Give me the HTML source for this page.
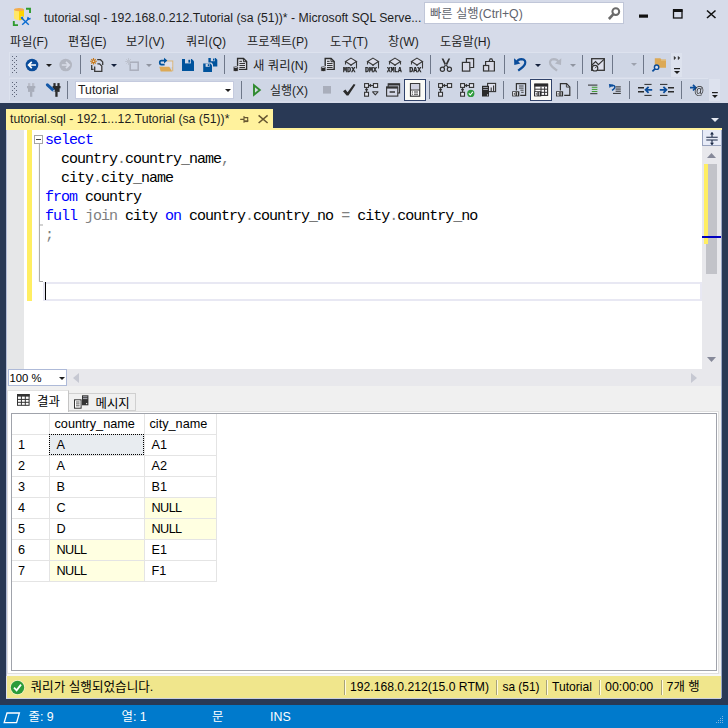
<!DOCTYPE html>
<html lang="ko">
<head>
<meta charset="utf-8">
<title>tutorial.sql - 192.168.0.212.Tutorial (sa (51))* - Microsoft SQL Server Management Studio</title>
<style>
html,body{margin:0;padding:0;}
body{width:728px;height:728px;overflow:hidden;position:relative;background:#D6DBE9;
  font-family:"Liberation Sans","Noto Sans CJK KR","NanumGothic",sans-serif;font-size:12px;color:#1e1e1e;}
.abs,svg{position:absolute;}
svg{overflow:visible;}
.t{position:absolute;white-space:nowrap;line-height:16px;}
#title{left:44px;top:10px;font-size:12.27px;color:#1e1e1e;}
#quick{left:424px;top:2px;width:199.5px;height:22px;background:#fff;border:1px solid #c0c6d8;box-sizing:border-box;}
#quick .t{left:5px;top:3px;font-size:12.3px;color:#5f646e;}
#menubar .t{top:34px;font-size:12.2px;}
.tb{background:#CFD6E5;box-shadow:-1px -1px 0 #DDE2EE;}
.ov{background:#DDE2EE;}
.sep{position:absolute;width:1px;background:#7f8aa3;}
.tog{position:absolute;box-sizing:border-box;border:1px solid #30426a;background:#FBFBF6;}
#navy{left:0;top:103px;width:728px;height:602px;background:#293955;}
#tab{left:6px;top:109px;width:267px;height:20px;background:#FFF29D;}
#tab .t{left:4px;top:2px;font-size:12.26px;color:#1e1e1e;}
#yline{left:6px;top:128px;width:716px;height:2px;background:#FFF29D;}
#editor{left:6px;top:130px;width:716px;height:239px;background:#fff;overflow:hidden;}
#margin{left:0;top:0;width:18px;height:239px;background:#E6E7E8;}
#ybar{left:20.5px;top:0;width:5px;height:171px;background:#FFEE62;}
pre.code{position:absolute;margin:0;left:39px;top:1px;font-family:"Liberation Mono","DejaVu Sans Mono",monospace;font-size:15px;letter-spacing:-1.001px;line-height:19px;color:#000;}
.k{color:#0000ff;}.g{color:#808080;}
#vscroll{left:696px;top:0;width:20px;height:239px;background:#E8E8EC;}
#hrow{left:6px;top:369px;width:716px;height:17px;background:#E8E8EC;}
#zoom{left:1.5px;top:0;width:59.5px;height:16.5px;background:#fff;border:1px solid #AEBAD8;box-sizing:border-box;}
#zoom .t{left:1px;top:0;font-size:11.3px;color:#000;}
#respane{left:6px;top:386px;width:716px;height:290px;background:#F0F0F0;}
#respane:after{content:"";position:absolute;left:0;top:288px;width:716px;height:2px;background:#F7F7F7;}
#grid{left:5px;top:27px;width:706px;height:258px;background:#fff;border:1px solid #A0A3AB;box-sizing:border-box;overflow:hidden;}
#qstatus{left:6px;top:676px;width:715px;height:22.5px;background:#F0E68C;box-sizing:border-box;border-bottom:1px solid #cdd0e0;border-left:1px solid #dfe0ea;}
#qstatus .t{top:3px;font-size:12.4px;color:#000;}
#qstatus i{position:absolute;top:4px;width:1px;height:15px;background:#fffbe0;border-left:1px solid #a8a27a;}
#statusbar{left:0;top:705px;width:728px;height:23px;background:#007ACC;color:#fff;}
#statusbar .t{top:4px;font-size:12.4px;}
table.res{position:absolute;left:0;top:0;border-collapse:collapse;font-size:12.7px;letter-spacing:0;color:#000;}
table.res td{height:21px;padding:0 0 0 7px;border-right:1px solid #e4e4e4;border-bottom:1px solid #e4e4e4;white-space:nowrap;box-sizing:border-box;}
td.n{background:#FFFFE1;letter-spacing:-0.6px;}
table.res tr.h td{height:20px;}
table.res td:first-child{padding-left:6px;}
</style>
</head>
<body>
<!-- title bar -->
<svg style="left:0;top:0" width="40" height="30" viewBox="0 0 40 30">
  <path d="M14 9.5 V18.6 C15.5 20.2 18 20.4 19 20.2 V11Z" fill="#FFE76A"/>
  <path d="M19 11 V20.2 C21 20.2 23 19.4 24 18.4 V9.5Z" fill="#FFD400"/>
  <ellipse cx="19" cy="9.6" rx="5" ry="1.7" fill="#F4AC4C"/>
  <path d="M26 8.8 H30 V13" fill="none" stroke="#2E9B2E" stroke-width="1.9"/>
  <path d="M13.8 21 V25.1 H18" fill="none" stroke="#2E9B2E" stroke-width="1.9"/>
  <path d="M20.5 16.6 L23 16.2 L24 17.6 L23.2 19.4Z" fill="#D6DBE9"/>
  <path d="M21.6 18 L28.8 24.8 M29 18.4 L22.2 24.8" stroke="#0C6CD0" stroke-width="1.4" fill="none"/>
  <path d="M20.6 17.6 L22.6 16.6 L23.4 18.6 L21.6 19.2Z" fill="#0C6CD0"/>
  <path d="M27.6 19.6 L28.2 17 M28 19.2 L30.6 18.6" stroke="#0C6CD0" stroke-width="1.5" fill="none"/>
</svg>
<div id="title" class="t">tutorial.sql - 192.168.0.212.Tutorial (sa (51))* - Microsoft SQL Serve...</div>
<div id="quick" class="abs"><span class="t">빠른 실행(Ctrl+Q)</span>
  <svg style="left:183px;top:4px" width="12" height="13" viewBox="0 0 12 13"><circle cx="7.8" cy="4.6" r="3.4" fill="none" stroke="#6a6a6a" stroke-width="2"/><path d="M5.4 7.2 L0.9 12" stroke="#6a6a6a" stroke-width="2.6"/></svg>
</div>
<svg style="left:639px;top:8px" width="80" height="12" viewBox="0 0 80 12">
  <rect x="0" y="6.5" width="9" height="3.2" fill="#111"/>
  <rect x="34.5" y="2" width="8.5" height="8" fill="none" stroke="#111" stroke-width="1.3"/><rect x="34" y="1" width="9.5" height="3" fill="#111"/>
  <path d="M68 2.5 L76.5 10 M76.5 2.5 L68 10" stroke="#111" stroke-width="1.6"/>
</svg>
<!-- menu bar -->
<div id="menubar">
  <span class="t" style="left:10px">파일(F)</span><span class="t" style="left:68px">편집(E)</span><span class="t" style="left:126px">보기(V)</span><span class="t" style="left:186px">쿼리(Q)</span><span class="t" style="left:247px">프로젝트(P)</span><span class="t" style="left:330px">도구(T)</span><span class="t" style="left:388px">창(W)</span><span class="t" style="left:440px">도움말(H)</span>
</div>
<!-- toolbars -->
<div class="abs tb" style="left:10px;top:53px;width:661px;height:23.5px"></div>
<div class="abs ov" style="left:671px;top:52.5px;width:11px;height:24px"></div>
<div class="abs tb" style="left:10px;top:79px;width:699px;height:22px"></div>
<div class="abs ov" style="left:709px;top:78.8px;width:11px;height:22.2px"></div>
<div class="abs" style="left:75.4px;top:81px;width:159.1px;height:18px;background:#fff;border:1px solid #c4cade;box-sizing:border-box"></div>
<div class="tog" style="left:404.3px;top:79.3px;width:21.4px;height:21.4px"></div>
<div class="tog" style="left:530px;top:79.3px;width:22px;height:21.4px"></div>
<span class="t" style="left:78px;top:82px;font-size:12.3px;color:#1e1e1e">Tutorial</span>
<span class="t" style="left:253px;top:58px;font-size:12.4px">새 쿼리(N)</span>
<span class="t" style="left:270px;top:83px;font-size:12px">실행(X)</span>
<svg style="left:0;top:50px;will-change:transform" width="728" height="54" viewBox="0 50 728 54">
 <defs>
  <pattern id="gp" x="12" y="56" width="4" height="4" patternUnits="userSpaceOnUse"><rect x="0" y="0" width="1" height="1" fill="#5d6579"/><rect x="2" y="2" width="1" height="1" fill="#5d6579"/></pattern>
  <pattern id="gp2" x="12" y="82" width="4" height="4" patternUnits="userSpaceOnUse"><rect x="0" y="0" width="1" height="1" fill="#5d6579"/><rect x="2" y="2" width="1" height="1" fill="#5d6579"/></pattern>
 </defs>
 <rect x="12" y="56" width="5" height="17" fill="url(#gp)"/>
 <rect x="12" y="82" width="5" height="15" fill="url(#gp2)"/>
 <!-- separators row1 -->
 <g fill="#6e7789">
  <rect x="80" y="55" width="1" height="19"/><rect x="224" y="55" width="1" height="19"/><rect x="430" y="55" width="1" height="19"/><rect x="504" y="55" width="1" height="19"/><rect x="582" y="55" width="1" height="19"/><rect x="612" y="55" width="1" height="19"/><rect x="643" y="55" width="1" height="19"/>
  <rect x="67" y="81" width="1" height="18"/><rect x="241" y="81" width="1" height="18"/><rect x="429" y="81" width="1" height="18"/><rect x="503" y="81" width="1" height="18"/><rect x="577" y="81" width="1" height="18"/><rect x="629" y="81" width="1" height="18"/><rect x="681" y="81" width="1" height="18"/>
 </g>
 <!-- back / forward -->
 <circle cx="32" cy="65" r="6.3" fill="#0A4C9A"/>
 <path d="M28.6 65 H36 M31.8 61.8 L28.6 65 L31.8 68.2" stroke="#fff" stroke-width="1.7" fill="none"/>
 <path d="M46 64 H52 L49 67Z" fill="#1e1e1e"/>
 <circle cx="65.7" cy="65" r="6.3" fill="#B2B6C1"/>
 <path d="M61.8 65 H69 M66 61.8 L69.2 65 L66 68.2" stroke="#D9DDE8" stroke-width="1.7" fill="none"/>
 <!-- new item -->
 <g fill="none" stroke="#3a3a3a" stroke-width="1.3">
  <path d="M97.2 59.7 H100.5 L102.7 61.9 V65"/>
  <path d="M91.7 65 V69.3 H93.6"/>
  <path d="M97.4 63.8 H99.5 L101.8 66.1 V71.3 H94.7 V66.4" fill="#DEE0EC"/>
 </g>
 <path d="M93.5 58.1 V64.6 M90.1 61.3 H96.9 M91.3 59.1 L95.7 63.5 M95.7 59.1 L91.3 63.5" stroke="#C8791B" stroke-width="1.1"/>
 <circle cx="93.5" cy="61.3" r="0.8" fill="#E9E2D8"/>
 <path d="M111 64 H117 L114 67Z" fill="#14213d"/>
 <!-- disabled new -->
 <rect x="130.2" y="62.2" width="8" height="8" fill="none" stroke="#A9AEBB" stroke-width="1.5"/>
 <path d="M128.5 58 V65 M125.2 61.5 H131.8 M126.2 59.2 L130.8 63.8 M130.8 59.2 L126.2 63.8" stroke="#BEC3CF" stroke-width="1"/>
 <path d="M146 64 H152 L149 67Z" fill="#8f94a0"/>
 <!-- open -->
 <path d="M166.4 61.1 H172.7 V71.3" fill="none" stroke="#DCB67A" stroke-width="1.1"/>
 <rect x="163" y="61.6" width="9.2" height="5.4" fill="#DDDFEA"/>
 <path d="M159.3 66.7 H169.2 L172.3 71.6 H160.7Z" fill="#DCA956"/>
 <path d="M164.6 64.6 H161.4 C159.2 64.6 159.2 60.6 161.4 60.6 H165" fill="none" stroke="#00539C" stroke-width="1.7"/>
 <path d="M164 57.8 L167.4 60.6 L164 63.4Z" fill="#00539C"/>
 <!-- save -->
 <path d="M182 59 H191.8 L194 61.2 V71 H182Z" fill="#00539C"/>
 <rect x="185" y="59" width="6" height="4.4" fill="#CFD6E5"/><rect x="188.4" y="59.8" width="1.8" height="2.8" fill="#00539C"/>
 <!-- save all -->
 <path d="M208.4 58 H215.6 L217.3 59.7 V66.6 H208.4Z" fill="#00539C"/>
 <rect x="210.8" y="58" width="4" height="3.2" fill="#CFD6E5"/><rect x="213" y="58.6" width="1.3" height="2" fill="#00539C"/>
 <path d="M202.2 62.6 H211.4 L213 64.2 V72.6 H202.2Z" fill="#CFD6E5"/>
 <path d="M203.2 63.6 H210.4 L212 65.2 V72 H203.2Z" fill="#00539C"/>
 <rect x="205.6" y="63.6" width="4" height="3.2" fill="#CFD6E5"/><rect x="207.8" y="64.2" width="1.3" height="2" fill="#00539C"/>
 <!-- new query & db doc icons -->
 <g id="dbdoc">
  <path d="M237.6 66 V58.5 H243.5 L246.6 61.5 V69.4 H239" fill="#E6E8F1" stroke="#2f2f2f" stroke-width="1.4"/>
  <path d="M243.4 58.7 V61.7 H246.4" fill="none" stroke="#2f2f2f" stroke-width="1"/>
  <path d="M239.4 61.3 H242 M239.4 63.45 H245 M239.4 65.45 H245 M239.4 67.45 H245" stroke="#2b2b2b" stroke-width="1"/>
  <path d="M233.2 67.2 A2.55 1.1 0 0 1 238.3 67.2 V70.5 A2.55 1.1 0 0 1 233.2 70.5Z" fill="#2b2b2b" stroke="#DCE0EC" stroke-width="0.7"/>
  <ellipse cx="235.75" cy="67.3" rx="1.7" ry="0.6" fill="#b7bbc8"/>
 </g>
 <use href="#dbdoc" x="87.6" y="0"/>
 <!-- MDX DMX XMLA DAX -->
 <g id="cube" stroke="#3a3a3a" stroke-width="1.1">
  <path d="M351 58.1 L356.5 61.5 L351 65 L345.5 61.5Z" fill="#DCDEEA"/><path d="M345.5 61.5 V64.6 M356.5 61.5 V64.6 M351 65 V66" fill="none"/>
 </g>
 <path d="M356.5 64 V68.4 M378.5 64 V68.4 M422.5 64 V68.4" stroke="#3a3a3a" stroke-width="1.1"/>
 <use href="#cube" x="22" y="0"/><use href="#cube" x="44" y="0"/><use href="#cube" x="66" y="0"/>
 <g font-family="Liberation Mono, monospace" font-weight="bold" font-size="6.6" fill="#222" stroke="#222" stroke-width="0.25" lengthAdjust="spacingAndGlyphs">
  <text x="343" y="71.6" textLength="12.2" lengthAdjust="spacingAndGlyphs">MDX</text><text x="365" y="71.6" textLength="12" lengthAdjust="spacingAndGlyphs">DMX</text><text x="387" y="71.6" textLength="14.6" lengthAdjust="spacingAndGlyphs">XMLA</text><text x="409.2" y="71.6" textLength="12" lengthAdjust="spacingAndGlyphs">DAX</text>
 </g>
 <!-- cut copy paste -->
 <path d="M441.6 58.4 L443.4 58.4 L446.6 65 L445.2 66.2Z M450.2 58.4 L448.4 58.4 L445.2 65 L446.6 66.2Z" fill="#333"/>
 <g fill="none" stroke="#333" stroke-width="1.2">
  <path d="M445.4 65.4 L443.6 67.4 M446.4 65.4 L448.2 67.4"/>
  <circle cx="442.4" cy="69.2" r="2.1"/><circle cx="449.4" cy="69.2" r="2.1"/>
  <path d="M466.4 62 V58.6 H473.6 V67.5 H470.2" fill="#D8DAE6"/>
  <rect x="462.4" y="62.4" width="7.4" height="8.7" fill="#D8DAE6"/>
  <path d="M489 61.4 L490.2 58.8 H491.8 L493 61.4"/>
  <path d="M485.6 65 V61.5 H494.4 V71 H489.2" fill="#D8DAE6"/>
  <rect x="483.5" y="65.5" width="5.2" height="5.5" fill="#D8DAE6"/>
 </g>
 <!-- undo / redo -->
 <g id="undo" stroke="#0A4C9A" fill="#0A4C9A"><path d="M516.6 62.6 C517.4 60 519.6 59.1 521.6 59.1 C524.6 59.2 526 61.6 525 64 C524 66.4 521 68.6 518.2 70.6" fill="none" stroke-width="2.2"/>
 <path d="M514 58.2 L514.3 65 L520.4 63.4Z" stroke="none"/></g>
 <g transform="translate(1075.3,0) scale(-1,1)" stroke="#B2B6C1" fill="#B2B6C1"><path d="M516.6 62.6 C517.4 60 519.6 59.1 521.6 59.1 C524.6 59.2 526 61.6 525 64 C524 66.4 521 68.6 518.2 70.6" fill="none" stroke-width="2.2"/><path d="M514 58.2 L514.3 65 L520.4 63.4Z" stroke="none"/></g>
 <path d="M535 64 H541 L538 67Z" fill="#14213d"/>
 <path d="M570 64 H576 L573 67Z" fill="#8f94a0"/>
 <!-- activity monitor -->
 <rect x="591.7" y="58.7" width="12.6" height="11.6" fill="#DEE0EC" stroke="#333" stroke-width="1.3"/>
 <path d="M592 65 L595.6 61.6 L598.4 64.6 L604 59.4" fill="none" stroke="#333" stroke-width="1.2"/>
 <circle cx="595" cy="68.2" r="2.8" fill="#DEE0EC" stroke="#333" stroke-width="1.2"/><path d="M595 68.2 L596.6 66.6" stroke="#333" stroke-width="0.9"/>
 <path d="M631 63 H637 L634 66Z" fill="#9da2ae"/>
 <!-- find in files -->
 <path d="M654.8 58.2 H660.4 L661.4 59.4 H666 V67.7 H654.8Z" fill="#DCA956"/>
 <path d="M661 60.3 H666" stroke="#E9C588" stroke-width="0.7"/>
 <circle cx="656.6" cy="67.2" r="2.2" fill="#DCE0EC" stroke="#0A4C9A" stroke-width="1.4"/>
 <path d="M655 68.8 L652.4 71.4" stroke="#0A4C9A" stroke-width="1.7"/>
 <!-- overflow 1 -->
 <path d="M674.2 56.4 L675.8 58 L674.2 59.6Z M678.2 56.4 L679.8 58 L678.2 59.6Z" fill="#1e1e1e" stroke="#1e1e1e" stroke-width="0.5"/>
 <rect x="674" y="68" width="6" height="1.2" fill="#1e1e1e"/><path d="M674 71 H680 L677 74Z" fill="#1e1e1e"/>

 <!-- row 2 -->
 <g fill="#A9AEBB"><rect x="28" y="83.1" width="2.3" height="3.2" fill="#B9BDC9"/><rect x="32" y="83.1" width="2.3" height="3.2" fill="#B9BDC9"/><rect x="27" y="86" width="8.3" height="2.3"/><rect x="28" y="88" width="6.3" height="3.9"/><rect x="30" y="91.8" width="2.3" height="5"/></g>
 <g fill="#2b2b2b"><rect x="53.4" y="83.1" width="2.2" height="3.2"/><rect x="57.4" y="83.1" width="2.2" height="3.2"/><rect x="52.6" y="86" width="7.9" height="2.3"/><rect x="53.4" y="88" width="6.2" height="3.9"/><rect x="55.3" y="91.8" width="2.3" height="5"/></g>
 <path d="M47.4 84.9 L53.2 90.2" stroke="#1559A8" stroke-width="3.1" stroke-linecap="round"/><path d="M52.4 91.4 L54.8 91.8 L54.4 89.4Z" fill="#E8ECF4"/>
 <path d="M225 89 H231 L228 92Z" fill="#1e1e1e"/>
 <path d="M254 85.2 V94.8 L259.8 90Z" fill="#D3DCE0" stroke="#2F8A2F" stroke-width="1.9" stroke-linejoin="miter"/>
 <rect x="323" y="86" width="8" height="7.6" fill="#A9AEBB"/>
 <path d="M343 91.3 L345.4 89.5 L347.6 92.2 L353.7 84 L355.5 84.7 L348.4 95.6 L346.6 95.6Z" fill="#2b2b2b"/>
 <!-- plan icons -->
 <g id="plan" fill="none" stroke="#333" stroke-width="1.1">
  <rect x="438.6" y="83.6" width="3.9" height="3.8" fill="#E6E8F1"/><rect x="447.4" y="83.6" width="4.2" height="3.8" fill="#E6E8F1"/><rect x="438.6" y="92.3" width="3.9" height="3.9" fill="#E6E8F1"/>
  <path d="M447 85.5 H444 M445 84.2 L443.4 85.5 L445 86.8 M440.55 92 V89.4 M439.3 90.2 L440.55 88.6 L441.8 90.2"/>
 </g>
 <use href="#plan" x="-74" y="0"/>
 <path d="M372.6 91.8 H378 L375.3 94.8Z" fill="none" stroke="#3a3a3a" stroke-width="1.1" stroke-linejoin="round"/>
 <use href="#plan" x="22" y="0"/>
 <circle cx="470.8" cy="93.4" r="3.6" fill="#2E9A3C"/><path d="M468.8 93.4 L470.3 95 L472.8 91.8" fill="none" stroke="#fff" stroke-width="1.1"/>
 <!-- query options windows -->
 <g fill="#D4D8E6" stroke="#333" stroke-width="1.1">
  <rect x="388.2" y="83.8" width="11.4" height="9.2"/><path d="M388.2 84.6 H399.6" stroke-width="1.8"/>
  <rect x="386.6" y="86.9" width="11.2" height="9.2"/><path d="M386.6 87.7 H397.8" stroke-width="1.8"/>
  <path d="M389.6 92 H395" stroke-width="1.5"/>
 </g>
 <!-- sqlcmd toggle icon -->
 <rect x="410.5" y="83.6" width="9.2" height="12.6" fill="#fff" stroke="#3a3a3a" stroke-width="1.2"/>
 <rect x="411.1" y="84.2" width="8" height="5.4" fill="#CFD1DF"/>
 <path d="M410.5 90 H419.7" stroke="#3a3a3a" stroke-width="1"/>
 <path d="M412 92 H413 M414 92 H418 M412 94.2 H413 M414 94.2 H418" stroke="#3a3a3a" stroke-width="1"/>
 <!-- server stats -->
 <rect x="487.6" y="83.4" width="8" height="8.2" fill="#DEE0EC" stroke="#333" stroke-width="1.1"/>
 <path d="M491.2 91 V87.6 M493.6 91 V85.4" stroke="#333" stroke-width="1.1"/>
 <rect x="482" y="85.8" width="7" height="10.7" fill="#2b2b2b"/><path d="M483.2 87.5 H487.8 M483.2 89.5 H487.8" stroke="#b9bdcb" stroke-width="0.8"/><rect x="487" y="94.4" width="1.1" height="1.1" fill="#e6e8f0"/>
 <!-- results to text / grid / file -->
 <g stroke="#333" fill="none" stroke-width="1.2">
  <path d="M516.4 90.6 V83.7 H525.6 V95.4 H520.2"/>
  <path d="M519 86 H523.6 M519 88.1 H523.6 M520.4 90.2 H523.6 M521.2 92.3 H523.6" stroke-width="0.9"/>
  <path d="M560.4 90.6 V83.7 H566.6 L569.8 86.9 V95.4 H564.2"/><path d="M566.4 84 V87.1 H569.6" stroke-width="0.9"/>
  <rect x="534.8" y="84.2" width="12.8" height="11.2" fill="#fff" stroke-width="1.1"/>
  <path d="M534.8 89.2 H547.6 M534.8 92.3 H547.6 M541 86.6 V95.4 M544.6 86.6 V95.4" stroke-width="1"/>
 </g>
 <rect x="534.3" y="83.6" width="13.8" height="3" fill="#2b2b2b"/>
 <g id="b01"><rect x="512.2" y="91.3" width="7.1" height="5.1" fill="#2b2b2b"/><rect x="513.5" y="92.5" width="1.6" height="2.7" fill="none" stroke="#f4f5fa" stroke-width="0.8"/><path d="M517.4 92.1 V95.6" stroke="#f4f5fa" stroke-width="0.9"/></g>
 <use href="#b01" x="21.9" y="0"/><use href="#b01" x="43.8" y="0"/>
 <!-- comment / uncomment -->
 <path d="M588 85.1 H597.4 M590.2 93.7 H597.4" stroke="#2b2b2b" stroke-width="1"/>
 <path d="M591.8 87.25 H597.4 M591.8 89.4 H597.4 M591.8 91.55 H597.4" stroke="#3C9A2E" stroke-width="1"/>
 <path d="M611.4 86.4 C613 84.6 615.6 85.6 614.6 87.8 C614 89 613 89.8 612 90.4" fill="none" stroke="#0A4C9A" stroke-width="1.5"/><path d="M608.9 84 L613.2 84.5 L609.5 88Z" fill="#0A4C9A"/>
 <path d="M615.6 86.9 H620.8 M615.6 89.05 H620.8 M615.6 91.2 H620.8 M613 93.4 H620.8" stroke="#2b2b2b" stroke-width="1"/>
 <!-- indent icons -->
 <path d="M644.4 84.4 H651.6 M644.4 95.4 H651.6 M660 84.4 H667.4 M660 95.4 H667.4" stroke="#2b2b2b" stroke-width="1"/>
 <path d="M638 87.8 H644 M638 91.8 H644 M668 87.8 H674 M668 91.8 H674" stroke="#2b2b2b" stroke-width="1.6"/>
 <path d="M646 89.8 H652.2 M648.6 86.8 L645.6 89.8 L648.6 92.8" fill="none" stroke="#0A4C9A" stroke-width="1.8"/>
 <path d="M659.8 89.8 H666 M663.4 86.8 L666.4 89.8 L663.4 92.8" fill="none" stroke="#0A4C9A" stroke-width="1.8"/>
 <!-- arrow @ -->
 <path d="M690 87.7 H695.6 M693 84.9 L695.8 87.7 L693 90.5" fill="none" stroke="#0A4C9A" stroke-width="1.7"/>
 <text x="694" y="94.2" font-family="Liberation Sans, sans-serif" font-size="10" fill="#2b2b2b">@</text>
 <!-- overflow 2 -->
 <rect x="712" y="92" width="5.8" height="1.2" fill="#1e1e1e"/><path d="M712 95 H717.8 L714.9 98Z" fill="#1e1e1e"/>
</svg>
<!-- document well -->
<div id="navy" class="abs"></div>
<div id="tab" class="abs"><span class="t">tutorial.sql - 192.1...12.Tutorial (sa (51))*</span>
  <svg style="left:234px;top:6px" width="30" height="10" viewBox="0 0 30 10">
   <path d="M0.2 4.4 H3.6 M4 0.9 V7.8 M4 2.6 H7.7 V6" fill="none" stroke="#665631" stroke-width="1.1"/><path d="M4 6.2 H8.3" stroke="#665631" stroke-width="1.8"/>
   <path d="M18.6 0.4 L27.6 8 M27.6 0.4 L18.6 8" stroke="#665631" stroke-width="1.5"/>
  </svg>
</div>
<div id="yline" class="abs"></div>
<svg style="left:711px;top:118px" width="8" height="4" viewBox="0 0 8 4"><path d="M0 0 H8 L4 4Z" fill="#e6e9f1"/></svg>
<div id="editor" class="abs">
  <div id="margin" class="abs"></div>
  <div id="ybar" class="abs"></div>
  <!-- outlining -->
  <svg style="left:27px;top:0" width="14" height="160" viewBox="0 0 14 160">
    <rect x="1.5" y="5.5" width="8" height="8" fill="#fff" stroke="#a5a5a5" stroke-width="1"/>
    <path d="M3 9.5 H8" stroke="#444" stroke-width="1"/>
    <path d="M6.4 14 V151.5 H10" fill="none" stroke="#a5a5a5" stroke-width="1"/>
    <path d="M6.4 95 H10" stroke="#a5a5a5" stroke-width="1"/>
  </svg>
<pre class="code"><span class="k">select</span>
  country<span class="g">.</span>country_name<span class="g">,</span>
  city<span class="g">.</span>city_name
<span class="k">from</span> country
<span class="k">full</span> <span class="g">join</span> city <span class="k">on</span> country<span class="g">.</span>country_no <span class="g">=</span> city<span class="g">.</span>country_no
<span class="g">;</span></pre>
  <!-- current line -->
  <div class="abs" style="left:37px;top:152px;width:659px;height:19px;box-sizing:border-box;border:2px solid #E8E8F3"></div>
  <div class="abs" style="left:38.6px;top:152px;width:1.6px;height:18px;background:#000"></div>
  <!-- vertical scrollbar -->
  <div id="vscroll" class="abs">
    <div class="abs" style="left:0;top:0;width:19px;height:16px;background:#E7EBF7;border-left:1px solid #98a2bd;border-bottom:1px solid #98a2bd;box-sizing:border-box"></div>
    <svg style="left:4px;top:2px" width="12" height="13" viewBox="0 0 12 13">
      <path d="M0.3 5.2 H11.7 M0.3 8 H11.7" stroke="#1c2a47" stroke-width="1.1"/>
      <path d="M6 0.6 V5 M6 8 V12.6" stroke="#1c2a47" stroke-width="1.1"/>
      <path d="M4 2.4 L6 0 L8 2.4Z M4 10.8 L6 13.2 L8 10.8Z" fill="#1c2a47"/>
    </svg>
    <svg style="left:5px;top:23px" width="9" height="5" viewBox="0 0 9 5"><path d="M0 5 H9 L4.5 0Z" fill="#868999"/></svg>
    <div class="abs" style="left:4px;top:34px;width:11px;height:110px;background:#C2C3C9"></div>
    <div class="abs" style="left:1.6px;top:34px;width:4px;height:79.5px;background:#FFEE62"></div>
    <div class="abs" style="left:0;top:106px;width:20px;height:2px;background:#0000C0"></div>
    <svg style="left:5px;top:227px" width="9" height="5" viewBox="0 0 9 5"><path d="M0 0 H9 L4.5 5Z" fill="#868999"/></svg>
    <div class="abs" style="left:19px;top:0;width:1px;height:239px;background:#cfd3df"></div>
  </div>
</div>
<div id="hrow" class="abs">
  <div id="zoom" class="abs"><span class="t">100 %</span>
    <svg style="left:50px;top:7px" width="6" height="3" viewBox="0 0 6 3"><path d="M0 0 H6 L3 3Z" fill="#1e1e1e"/></svg>
  </div>
  <svg style="left:66.5px;top:4px" width="6" height="10" viewBox="0 0 6 10"><path d="M6 0 V10 L0 5Z" fill="#C6C8D2"/></svg>
  <svg style="left:685px;top:4px" width="6" height="10" viewBox="0 0 6 10"><path d="M0 0 V10 L6 5Z" fill="#C6C8D2"/></svg>
</div>
<!-- results pane -->
<div id="respane" class="abs">
  <div class="abs" style="left:1px;top:25px;width:712px;height:263px;box-sizing:border-box;border:1px solid #DFDFDF;background:#fff"></div>
  <!-- tabs -->
  <div class="abs" style="left:1px;top:4px;width:62px;height:22px;background:#fff;border-right:1px solid #c4c4c4;border-top:1px solid #e2e2e2;border-left:1px solid #DFDFDF;box-sizing:border-box"></div>
  <div class="abs" style="left:63px;top:6.5px;width:67px;height:18.5px;border:1px solid #d0d0d0;border-left:none;box-sizing:border-box;background:#F0F0F0"></div>
  <svg style="left:11.3px;top:8px" width="13" height="12" viewBox="0 0 13 12">
    <rect x="0.5" y="0.5" width="11.6" height="10.8" fill="#fff" stroke="#333" stroke-width="1"/>
    <rect x="0" y="0" width="12.6" height="2.6" fill="#333"/>
    <path d="M0.5 5.4 H12.1 M0.5 8.3 H12.1 M4.4 2 V11.3 M8.3 2 V11.3" stroke="#333" stroke-width="1"/>
  </svg>
  <span class="t" style="left:31px;top:8px;font-size:12.4px;color:#000">결과</span>
  <svg style="left:68px;top:9px" width="15" height="14" viewBox="0 0 15 14">
    <rect x="8" y="0.3" width="6.4" height="10" fill="#333"/><path d="M9 1.8 H13.4 M9 3.6 H13.4" stroke="#c9ccd6" stroke-width="0.8"/><rect x="12" y="8" width="1.2" height="1.2" fill="#ddd"/>
    <rect x="0.5" y="4.8" width="6.6" height="8.4" fill="#fff" stroke="#333" stroke-width="1"/>
    <path d="M2 7 H5.6 M2 8.9 H5.6 M2 10.8 H5.6" stroke="#333" stroke-width="0.8"/>
  </svg>
  <span class="t" style="left:89.5px;top:10px;font-size:12.4px;color:#000">메시지</span>
  <div id="grid" class="abs">
  <table class="res">
   <tr class="h"><td style="width:37px"></td><td style="width:95px;padding-left:5px">country_name</td><td style="width:72px;padding-left:5px">city_name</td></tr>
   <tr><td>1</td><td style="background:#E8ECF0;outline:1px dotted #000;outline-offset:-1px">A</td><td>A1</td></tr>
   <tr><td>2</td><td>A</td><td>A2</td></tr>
   <tr><td>3</td><td>B</td><td>B1</td></tr>
   <tr><td>4</td><td>C</td><td class="n">NULL</td></tr>
   <tr><td>5</td><td>D</td><td class="n">NULL</td></tr>
   <tr><td>6</td><td class="n">NULL</td><td>E1</td></tr>
   <tr><td>7</td><td class="n">NULL</td><td>F1</td></tr>
  </table>
  </div>
</div>
<div class="abs" style="left:6px;top:130px;width:1px;height:568px;background:#b4bdd6"></div>
<div class="abs" style="left:721px;top:130px;width:1px;height:568px;background:#9ba7c6"></div>
<!-- query status bar -->
<div id="qstatus" class="abs">
  <svg style="left:3.4px;top:4px" width="15" height="15" viewBox="0 0 15 15"><circle cx="7.5" cy="7.5" r="7.4" fill="#F6F3CC"/><circle cx="7.5" cy="7.5" r="6.7" fill="#2C9B3A"/><path d="M4 7.6 L6.6 10.4 L11 4.6" fill="none" stroke="#fff" stroke-width="1.8"/></svg>
  <span class="t" style="left:23.5px;font-size:12.6px">쿼리가 실행되었습니다.</span>
  <i style="left:337.0px"></i><span class="t" style="left:343px;font-size:12.16px">192.168.0.212(15.0 RTM)</span>
  <i style="left:489.0px"></i><span class="t" style="left:495.5px;font-size:11.9px">sa (51)</span>
  <i style="left:539.0px"></i><span class="t" style="left:545.0px;font-size:12.1px">Tutorial</span>
  <i style="left:591.5px"></i><span class="t" style="left:598.0px">00:00:00</span>
  <i style="left:653.5px"></i><span class="t" style="left:659.5px">7개 행</span>
</div>
<!-- app status bar -->
<div id="statusbar" class="abs">
  <svg style="left:3px;top:7px" width="18" height="12" viewBox="0 0 18 12"><path d="M4 1 H16.4 L13.6 10.6 H1.2Z" fill="none" stroke="#fff" stroke-width="1.3"/></svg>
  <span class="t" style="left:28.5px">줄: 9</span><span class="t" style="left:121.5px">열: 1</span><span class="t" style="left:212px">문</span><span class="t" style="left:270px">INS</span>
  <svg style="left:715.5px;top:10.5px" width="8" height="8" viewBox="0 0 8 8"><g fill="#7fb3e0"><rect x="6" y="0" width="1" height="1"/><rect x="4" y="2" width="1" height="1"/><rect x="6" y="2" width="1" height="1"/><rect x="2" y="4" width="1" height="1"/><rect x="4" y="4" width="1" height="1"/><rect x="6" y="4" width="1" height="1"/><rect x="0" y="6" width="1" height="1"/><rect x="2" y="6" width="1" height="1"/><rect x="4" y="6" width="1" height="1"/><rect x="6" y="6" width="1" height="1"/></g></svg>
</div>
</body>
</html>
